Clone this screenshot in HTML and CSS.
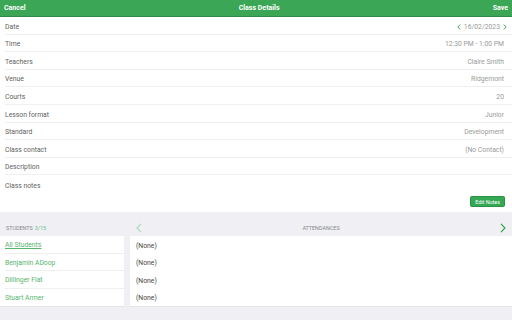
FILE: index.html
```html
<!DOCTYPE html>
<html lang="en">
<head>
    <meta charset="UTF-8">
    <meta name="viewport" content="width=device-width, initial-scale=1.0">
    <title>Class Details</title>
    <link rel="stylesheet" href="styles.css">
</head>
<body>
    <div class="topbar">
        <span class="top-btn">Cancel</span>
        <span class="top-title">Class Details</span>
        <span class="top-btn">Save</span>
    </div>

    <div class="form">
        <div class="row">
            <div class="row-in">
                <span class="label">Date</span>
                <span class="value date">
                    <svg class="chev" viewBox="0 0 4 6"><polyline points="3.2,0.6 0.8,3 3.2,5.4"/></svg>
                    16/02/2023
                    <svg class="chev" viewBox="0 0 4 6"><polyline points="0.8,0.6 3.2,3 0.8,5.4"/></svg>
                </span>
            </div>
        </div>
        <div class="row"><div class="row-in"><span class="label">Time</span><span class="value">12:30 PM - 1:00 PM</span></div></div>
        <div class="row"><div class="row-in"><span class="label">Teachers</span><span class="value">Claire Smith</span></div></div>
        <div class="row"><div class="row-in"><span class="label">Venue</span><span class="value">Ridgemont</span></div></div>
        <div class="row"><div class="row-in"><span class="label">Courts</span><span class="value">20</span></div></div>
        <div class="row"><div class="row-in"><span class="label">Lesson format</span><span class="value">Junior</span></div></div>
        <div class="row"><div class="row-in"><span class="label">Standard</span><span class="value">Development</span></div></div>
        <div class="row"><div class="row-in"><span class="label">Class contact</span><span class="value">(No Contact)</span></div></div>
        <div class="row"><div class="row-in"><span class="label">Description</span><span class="value"></span></div></div>
        <div class="notes">
            <span class="label">Class notes</span>
            <div class="notes-foot"><span class="edit-btn">Edit Notes</span></div>
        </div>
    </div>

    <div class="lists">
        <div class="students">
            <div class="sec-head">STUDENTS <span class="count">3/15</span></div>
            <div class="panel">
                <div class="srow"><span class="sname all">All Students</span></div>
                <div class="srow"><span class="sname">Benjamin ADoop</span></div>
                <div class="srow"><span class="sname">Dillinger Flat</span></div>
                <div class="srow last"><span class="sname">Stuart Armer</span></div>
            </div>
        </div>
        <div class="attend">
            <div class="sec-head att-head">
                <svg class="nav prev" viewBox="0 0 6 10"><polyline points="5,0.8 1,5 5,9.2"/></svg>
                <span>ATTENDANCES</span>
                <svg class="nav next" viewBox="0 0 6 10"><polyline points="1,0.8 5,5 1,9.2"/></svg>
            </div>
            <div class="panel">
                <div class="arow">(None)</div>
                <div class="arow">(None)</div>
                <div class="arow">(None)</div>
                <div class="arow">(None)</div>
            </div>
        </div>
    </div>
</body>
</html>
```

FILE: styles.css
```css
body {
    margin: 0;
    background: #efeff4;
    font-family: Roboto, "Liberation Sans", sans-serif;
}
.topbar {
    height: 16px;
    background: #3ba655;
    border-bottom: 1px solid #2f8c46;
    display: flex;
    align-items: center;
    justify-content: space-between;
    padding: 0 4px;
    color: #fff;
    font-size: 7px;
    font-weight: bold;
}
.form {
    background: #fff;
}
.row {
    height: 17.6px;
    padding-left: 5px;
}
.row-in {
    height: 100%;
    box-sizing: border-box;
    border-bottom: 1px solid #efefef;
    display: flex;
    align-items: center;
    justify-content: space-between;
    padding: 2.5px 8px 0 0;
    font-size: 6.8px;
}
.label {
    color: #616161;
}
.value {
    color: #9a9a9a;
}
.date {
    display: flex;
    align-items: center;
    gap: 3px;
    margin-right: -3px;
}
.chev {
    width: 4px;
    height: 6px;
    fill: none;
    stroke: #3ba655;
    stroke-width: 1;
}
.notes {
    height: 37px;
    padding: 2.5px 7px 0 5px;
    box-sizing: border-box;
    display: flex;
    flex-direction: column;
    font-size: 6.8px;
}
.notes .label {
    line-height: 17.6px;
}
.notes-foot {
    display: flex;
    justify-content: flex-end;
    margin-top: 1px;
}
.edit-btn {
    background: #34a853;
    border: 1px solid #2a9146;
    border-radius: 1.5px;
    color: #fff;
    font-size: 5.4px;
    padding: 1.5px 4px;
}
.lists {
    display: flex;
    gap: 6px;
}
.students {
    width: 124px;
}
.attend {
    flex: 1;
}
.sec-head {
    height: 24px;
    display: flex;
    align-items: center;
    padding: 7px 0 0 6px;
    box-sizing: border-box;
    font-size: 5.4px;
    color: #888;
}
.count {
    color: #6cc080;
    margin-left: 2px;
}
.att-head {
    justify-content: space-between;
    padding: 7px 6px 0 6px;
}
.nav {
    width: 6px;
    height: 10px;
    fill: none;
    stroke-width: 1.1;
}
.prev {
    stroke: #a8d9b3;
}
.next {
    stroke: #2aa146;
}
.panel {
    background: #fff;
    border-bottom: 1px solid #e4e4e8;
}
.srow {
    height: 17.5px;
    margin-left: 5px;
    border-bottom: 1px solid #efefef;
    box-sizing: border-box;
    display: flex;
    align-items: center;
    padding-top: 1.5px;
    font-size: 6.8px;
}
.srow.last {
    border-bottom: none;
}
.sname {
    color: #56b46c;
}
.sname.all {
    text-decoration: underline;
}
.arow {
    height: 17.5px;
    display: flex;
    align-items: center;
    padding: 1.5px 0 0 6px;
    box-sizing: border-box;
    font-size: 6.8px;
    color: #444;
}
```
